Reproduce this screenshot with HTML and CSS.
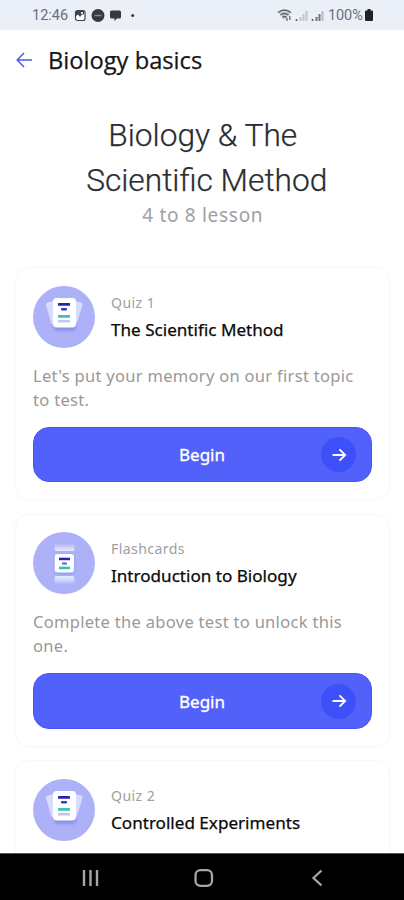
FILE: index.html
```
<!DOCTYPE html>
<html lang="en">
<head>
<meta charset="utf-8">
<title>Biology basics</title>
<link rel="stylesheet" href="styles.css">
</head>
<body>
<svg class="defs" aria-hidden="true">
  <defs>
    <linearGradient id="fadeUp" x1="0" y1="0" x2="0" y2="1"><stop offset="0" stop-color="#b4b8f6"/><stop offset="1" stop-color="#e8ebff"/></linearGradient>
    <linearGradient id="fadeDown" x1="0" y1="0" x2="0" y2="1"><stop offset="0" stop-color="#e8ebff"/><stop offset="1" stop-color="#b9befa"/></linearGradient>
    <filter id="soft" x="-50%" y="-50%" width="200%" height="200%"><feGaussianBlur stdDeviation="1.8"/></filter>
    <symbol id="quiz" viewBox="0 0 62 62">
      <circle cx="31" cy="31" r="31" fill="#adb1f8"/>
      <rect x="21" y="18" width="22" height="27" rx="4" fill="#6f78dc" opacity=".55" filter="url(#soft)"/>
      <path d="M14.500 16.500 24 14v26l-4-1.500Q18.500 38 18 36.500L13 19Q12.500 17 14.500 16.500Z" fill="#d8dcff"/>
      <path d="M48 16.500 38 14v26l4-1.500Q43.500 38 44 36.500L49.500 19Q50 17 48 16.500Z" fill="#d8dcff"/>
      <path d="M23.500 12h16q3.500 0 3.500 3.500v22q0 4-4 4H24q-4 0-4-4v-22Q20 12 23.500 12Z" fill="#fff"/>
      <rect x="25" y="17" width="12" height="2.700" rx=".5" fill="#2424b5"/>
      <rect x="28" y="22" width="6" height="2.500" rx="1" fill="#3737bd"/>
      <rect x="25" y="29" width="12" height="2.700" rx=".5" fill="#38c3b5"/>
      <rect x="25" y="34" width="12" height="2.500" rx=".5" fill="#c1c6ed"/>
    </symbol>
    <symbol id="flash" viewBox="0 0 62 62">
      <circle cx="31" cy="31" r="31" fill="#adb1f8"/>
      <path d="M21.500 12h20v5q0 2-2 2h-16q-2 0-2-2Z" fill="url(#fadeUp)"/>
      <path d="M23.500 44h16q2 0 2 2v5.500h-20V46q0-2 2-2Z" fill="url(#fadeDown)"/>
      <rect x="22" y="23" width="19" height="19" rx="4" fill="#6f78dc" opacity=".45" filter="url(#soft)"/>
      <rect x="21.700" y="22" width="19.300" height="18.500" rx="3" fill="#fff"/>
      <rect x="26" y="25.700" width="11" height="2.500" fill="#2424b5"/>
      <rect x="29" y="30.200" width="5" height="2.500" rx="1" fill="#7376cc"/>
      <rect x="26" y="34.700" width="11" height="2.500" fill="#2bc7b2"/>
    </symbol>
    <symbol id="arrow" viewBox="0 0 16 16"><path d="M1.500 8h12.700M8.500 2.300 14.200 8l-5.700 5.700" fill="none" stroke="currentColor" stroke-width="1.800"/></symbol>
  </defs>
</svg>
<div class="phone">
  <div class="status">
    <span class="clock">12:46</span>
    <svg class="notices" width="64" height="14" viewBox="0 0 64 14">
      <rect x="1.500" y="2.500" width="9.500" height="10" rx="2" fill="#fff" stroke="#40444a" stroke-width="1.200"/>
      <path d="M2 3h8v3.500H8L6 9 4 6.500 2 8Z" fill="#40444a"/><circle cx="8" cy="5" r="1.100" fill="#fff"/>
      <circle cx="24" cy="7.500" r="6.500" fill="#36393e"/><path d="M20.500 7.500h7" stroke="#858a90" stroke-width="1.500"/>
      <path d="M37.500 2.500h8q1.500 0 1.500 1.500v5q0 1.500-1.500 1.500h-2.500L40.500 13v-2.500h-3Q36 10.500 36 9V4q0-1.500 1.500-1.500Z" fill="#36393e"/>
      <circle cx="58.700" cy="7.500" r="1.500" fill="#36393e"/>
    </svg>
    <svg class="signals" width="48" height="14" viewBox="0 0 48 14">
      <path d="M1 4.500Q7.500-.5 14 4.500L7.500 12Z" fill="#c9ced5"/>
      <path d="M1 4.500Q7.500-.5 14 4.500M3.500 7q4-3 8 0M5.500 9.300q2-1.500 4 0" fill="none" stroke="#5d6268" stroke-width="1.500"/>
      <path d="M10 10v3M12.800 8v4" stroke="#666b71" stroke-width="1.300"/>
      <path d="M19.500 11v2M35.500 11v2" stroke="#5d6268" stroke-width="1.600"/>
      <path d="M23.500 9v4M26.500 6v7M29.500 3v10" stroke="#c0c5cc" stroke-width="2"/>
      <path d="M39.500 9v4M42.500 6v7" stroke="#70757b" stroke-width="2"/><path d="M45.500 3v10" stroke="#b6bbc1" stroke-width="2"/>
    </svg>
    <span class="percent">100%</span>
    <svg class="battery" width="8" height="14" viewBox="0 0 8 14"><path d="M2.500 1h3v1.500H7q1 0 1 1V12q0 1-1 1H1q-1 0-1-1V3.500q0-1 1-1h1.500Z" fill="#202226"/></svg>
  </div>
  <header class="appbar">
    <svg class="back" width="17" height="17" viewBox="0 0 17 17"><path d="M16 8H1.800M8 1 1.200 8 8 15" fill="none" stroke="#4858f5" stroke-width="1.500"/></svg>
    <span class="bartitle">Biology basics</span>
  </header>
  <main class="content">
    <div class="intro">
      <h1 class="title"><span class="lead">Biology &amp; The</span><br>Scientific Method</h1>
      <p class="range">4 to 8 lesson</p>
    </div>
    <section class="card">
      <div class="head"><svg class="badge"><use href="#quiz"/></svg><div class="labels"><div class="kind">Quiz 1</div><h2 class="name">The Scientific Method</h2></div></div>
      <p class="desc">Let's put your memory on our first topic<br>to test.</p>
      <div class="button"><span class="begin">Begin</span><span class="go"><svg width="16" height="16"><use href="#arrow"/></svg></span></div>
    </section>
    <section class="card">
      <div class="head"><svg class="badge"><use href="#flash"/></svg><div class="labels"><div class="kind">Flashcards</div><h2 class="name">Introduction to Biology</h2></div></div>
      <p class="desc">Complete the above test to unlock this<br>one.</p>
      <div class="button"><span class="begin">Begin</span><span class="go"><svg width="16" height="16"><use href="#arrow"/></svg></span></div>
    </section>
    <section class="card">
      <div class="head"><svg class="badge"><use href="#quiz"/></svg><div class="labels"><div class="kind">Quiz 2</div><h2 class="name">Controlled Experiments</h2></div></div>
    </section>
  </main>
  <nav class="navbar">
    <svg width="18" height="18" viewBox="0 0 18 18"><path d="M2 1v16M8.500 1v16M15 1v16" stroke="#a6a6a6" stroke-width="2.400"/></svg>
    <svg width="20" height="18" viewBox="0 0 20 18"><rect x="1.500" y="1.200" width="16.500" height="15.600" rx="5" fill="none" stroke="#a6a6a6" stroke-width="2.300"/></svg>
    <svg width="12" height="18" viewBox="0 0 12 18"><path d="M10.500 1.500 2.500 9l8 7.500" fill="none" stroke="#a6a6a6" stroke-width="2.300"/></svg>
  </nav>
</div>
</body>
</html>
```
FILE: styles.css
```
* { box-sizing: border-box; margin: 0; padding: 0; }
body { background: #fff; font-family: "Noto Sans", sans-serif; overflow: hidden; }
svg { display: block; flex: none; }
.defs { position: absolute; width: 0; height: 0; }
.phone { width: 404px; height: 900px; display: flex; flex-direction: column; overflow: hidden; }
.status { height: 30px; flex: none; background: #eaeff8; display: flex; align-items: center; padding: 0 31px 0 32px; font-family: Roboto, sans-serif; font-size: 14.5px; color: #6b6f75; }
.clock { width: 42px; white-space: nowrap; }
.signals { margin-left: auto; margin-right: 3px; }
.percent { width: 36px; white-space: nowrap; letter-spacing: -.1px; }
.battery { margin-left: 1px; }
.appbar { height: 60px; flex: none; display: flex; align-items: center; gap: 15px; padding-left: 16px; }
.bartitle { font-family: "Open Sans", sans-serif; font-size: 23.700px; line-height: 32px; color: #161616; -webkit-text-stroke: .25px #161616; white-space: nowrap; }
.content { height: 763px; flex: none; padding: 0 14.500px 0 15px; overflow: hidden; display: flex; flex-direction: column; gap: 13.500px; }
.intro { height: 163.500px; flex: none; padding: 23px 0 0 9px; text-align: center; }
.title { font-family: Roboto, sans-serif; font-weight: 300; font-size: 31.700px; line-height: 45px; color: #2a2c30; -webkit-text-stroke: .25px #2a2c30; white-space: nowrap; }
.lead { padding-right: 8px; }
.range { margin: -1px 0 0 -8px; font-size: 19px; line-height: 26px; color: #a0a0a0; letter-spacing: .7px; }
.card { height: 233px; flex: none; border: 1px solid #f8f8f8; border-radius: 14px; padding: 17.500px 16.500px 17px 17px; box-shadow: 0 0 4px rgba(0,0,0,.018); }
.head { display: flex; gap: 16px; height: 62px; }
.badge { width: 62px; height: 62px; }
.labels { padding-top: 6px; white-space: nowrap; }
.kind { font-size: 14.100px; line-height: 22px; color: #a0a0a0; letter-spacing: .4px; }
.name { font-size: 17.100px; line-height: 31px; font-weight: 400; color: #090909; -webkit-text-stroke: .25px #090909; }
.desc { margin-top: 16px; font-size: 16.500px; line-height: 24px; color: #999; white-space: nowrap; letter-spacing: .3px; }
.button { height: 55.500px; margin-top: 15px; border-radius: 16px; background: #5261fa; border: 1px solid #4655f8; color: #fff; display: grid; grid-template-columns: 1fr auto 1fr; align-items: center; padding: 1px 15px 0 0; }
.begin { grid-column: 2; margin-left: 14px; font-size: 17px; -webkit-text-stroke: .35px #fff; }
.go { grid-column: 3; justify-self: end; width: 35px; height: 35px; border-radius: 50%; background: #3e50fa; display: flex; align-items: center; justify-content: center; }
.navbar { height: 47px; flex: none; background: #000; border-top: 1px solid #555; display: grid; grid-template-columns: 18px 20px 12px; column-gap: 94px; align-items: center; padding: 2px 0 0 82px; }
.navbar svg:last-child { margin-left: 3px; }
```
